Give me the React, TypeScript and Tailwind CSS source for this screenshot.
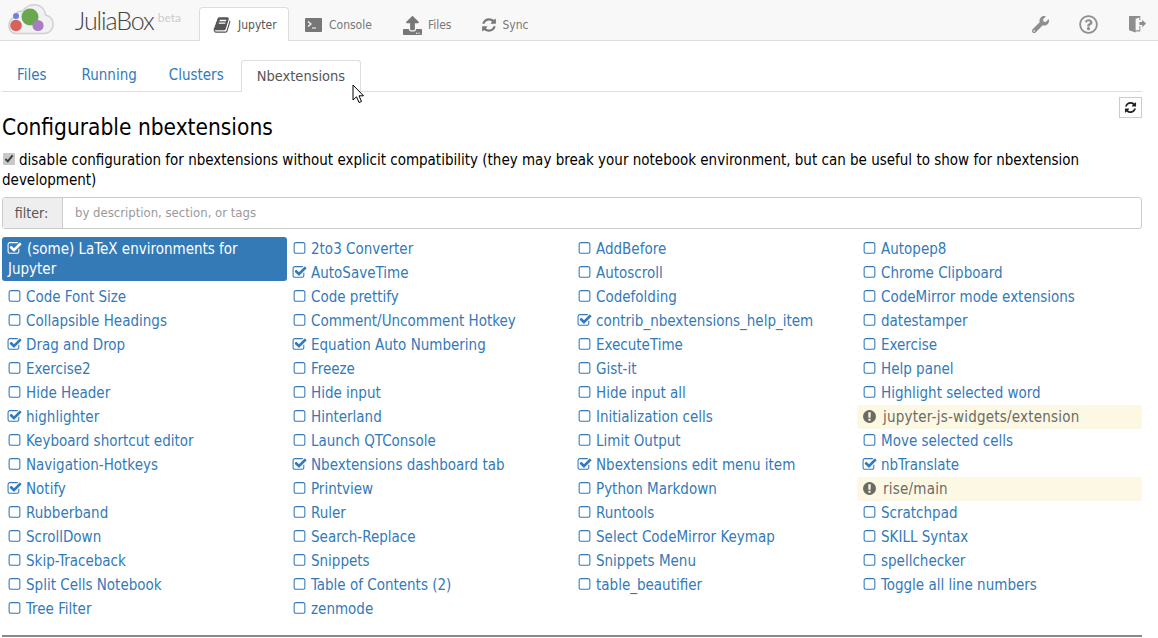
import React from 'react';
import { FaUpload, FaWrench, FaRegQuestionCircle } from 'react-icons/fa';

const REFRESH = 'M1639 1056q0 5-1 7-64 268-268 434.5t-478 166.5q-146 0-282.5-55t-243.5-157l-129 129q-19 19-45 19t-45-19-19-45v-448q0-26 19-45t45-19h448q26 0 45 19t19 45-19 45l-137 137q71 66 161 102t187 36q134 0 250-65t186-179q11-17 53-117 8-23 30-23h192q13 0 22.5 9.5t9.5 22.5zm25-800v448q0 26-19 45t-45 19h-448q-26 0-45-19t-19-45 19-45l138-138q-148-137-349-137-134 0-250 65t-186 179q-11 17-53 117-8 23-30 23h-199q-13 0-22.5-9.5t-9.5-22.5v-7q65-268 270-434.5t480-166.5q146 0 284 55.5t245 156.5l130-129q19-19 45-19t45 19 19 45z';
const BOOK = 'M1703 478q40 57 18 129l-275 906q-19 64-76.5 107.5t-122.5 43.5h-923q-77 0-148.5-53.5t-99.5-131.5q-24-67-2-127 0-4 3-27t4-37q1-8-3-21.5t-3-19.5q2-11 8-21t16.5-23.5 16.5-23.5q23-38 45-91.5t30-91.5q3-10 .5-30t-.5-28q3-11 17-28t17-23q21-36 42-92t25-90q1-9-2.5-32t.5-28q4-13 22-30.5t22-22.5q19-26 42.5-84.5t27.5-96.5q1-8-3-25.5t-2-26.5q2-8 9-18t18-23 17-21q8-12 16.5-30.5t15-35 16-36 19.5-32 26.5-23.5 36-11.5 47.5 5.5l-1 3q38-9 51-9h761q74 0 114 56t18 130l-274 906q-36 119-71.5 153.5t-128.5 34.5h-869q-27 0-38 15-11 16-1 43 24 70 144 70h923q29 0 56-15.5t35-41.5l300-987q7-22 5-57 38 15 59 43zm-1064 2q-4 13 2 22.5t20 9.5h608q13 0 25.5-9.5t16.5-22.5l21-64q4-13-2-22.5t-20-9.5h-608q-13 0-25.5 9.5t-16.5 22.5zm-83 256q-4 13 2 22.5t20 9.5h608q13 0 25.5-9.5t16.5-22.5l21-64q4-13-2-22.5t-20-9.5h-608q-13 0-25.5 9.5t-16.5 22.5z';
const CHECKED = 'M1472 930v318q0 119-84.5 203.5t-203.5 84.5h-832q-119 0-203.5-84.5t-84.5-203.5v-832q0-119 84.5-203.5t203.5-84.5h832q63 0 117 25 15 7 18 23 3 17-9 29l-49 49q-10 10-23 10-3 0-9-2-23-6-45-6h-832q-66 0-113 47t-47 113v832q0 66 47 113t113 47h832q66 0 113-47t47-113v-254q0-13 9-22l64-64q10-10 23-10 6 0 12 3 20 8 20 29zm231-489l-814 814q-24 24-57 24t-57-24l-430-430q-24-24-24-57t24-57l110-110q24-24 57-24t57 24l263 263 647-647q24-24 57-24t57 24l110 110q24 24 24 57t-24 57z';
const UNCHECKED = 'M1312 256h-832q-66 0-113 47t-47 113v832q0 66 47 113t113 47h832q66 0 113-47t47-113v-832q0-66-47-113t-113-47zm288 160v832q0 119-84.5 203.5t-203.5 84.5h-832q-119 0-203.5-84.5t-84.5-203.5v-832q0-119 84.5-203.5t203.5-84.5h832q119 0 203.5 84.5t84.5 203.5z';
const WARN = 'M896 128q209 0 385.5 103t279.5 279.5 103 385.5-103 385.5-279.5 279.5-385.5 103-385.5-103-279.5-279.5-103-385.5 103-385.5 279.5-279.5 385.5-103zm128 1247v-190q0-14-9-23.5t-22-9.5h-192q-13 0-23 10t-10 23v190q0 13 10 23t23 10h192q13 0 22-9.5t9-23.5zm-2-344l18-621q0-12-10-18-10-8-24-8h-220q-14 0-24 8-10 6-10 18l17 621q0 10 10 17.5t24 7.5h185q14 0 23.5-7.5t10.5-17.5z';

const Fa4 = ({ d, className }: { d: string; className?: string }) => (
  <svg viewBox="0 0 1792 1792" fill="currentColor" className={className}>
    <path d={d} />
  </svg>
);

type Ext = { name: string; on?: boolean; warn?: boolean; active?: boolean };

const columns: Ext[][] = [
  [
    { name: '(some) LaTeX environments for Jupyter', on: true, active: true },
    { name: 'Code Font Size' },
    { name: 'Collapsible Headings' },
    { name: 'Drag and Drop', on: true },
    { name: 'Exercise2' },
    { name: 'Hide Header' },
    { name: 'highlighter', on: true },
    { name: 'Keyboard shortcut editor' },
    { name: 'Navigation-Hotkeys' },
    { name: 'Notify', on: true },
    { name: 'Rubberband' },
    { name: 'ScrollDown' },
    { name: 'Skip-Traceback' },
    { name: 'Split Cells Notebook' },
    { name: 'Tree Filter' },
  ],
  [
    { name: '2to3 Converter' },
    { name: 'AutoSaveTime', on: true },
    { name: 'Code prettify' },
    { name: 'Comment/Uncomment Hotkey' },
    { name: 'Equation Auto Numbering', on: true },
    { name: 'Freeze' },
    { name: 'Hide input' },
    { name: 'Hinterland' },
    { name: 'Launch QTConsole' },
    { name: 'Nbextensions dashboard tab', on: true },
    { name: 'Printview' },
    { name: 'Ruler' },
    { name: 'Search-Replace' },
    { name: 'Snippets' },
    { name: 'Table of Contents (2)' },
    { name: 'zenmode' },
  ],
  [
    { name: 'AddBefore' },
    { name: 'Autoscroll' },
    { name: 'Codefolding' },
    { name: 'contrib_nbextensions_help_item', on: true },
    { name: 'ExecuteTime' },
    { name: 'Gist-it' },
    { name: 'Hide input all' },
    { name: 'Initialization cells' },
    { name: 'Limit Output' },
    { name: 'Nbextensions edit menu item', on: true },
    { name: 'Python Markdown' },
    { name: 'Runtools' },
    { name: 'Select CodeMirror Keymap' },
    { name: 'Snippets Menu' },
    { name: 'table_beautifier' },
  ],
  [
    { name: 'Autopep8' },
    { name: 'Chrome Clipboard' },
    { name: 'CodeMirror mode extensions' },
    { name: 'datestamper' },
    { name: 'Exercise' },
    { name: 'Help panel' },
    { name: 'Highlight selected word' },
    { name: 'jupyter-js-widgets/extension', warn: true },
    { name: 'Move selected cells' },
    { name: 'nbTranslate', on: true },
    { name: 'rise/main', warn: true },
    { name: 'Scratchpad' },
    { name: 'SKILL Syntax' },
    { name: 'spellchecker' },
    { name: 'Toggle all line numbers' },
  ],
];

const ExtItem = ({ ext }: { ext: Ext }) => {
  const tone = ext.active
    ? 'mb-[4px] bg-[#337ab7] text-white'
    : ext.warn
      ? 'bg-[#fcf8e3] tracking-[0.22px] text-[#6b6b66]'
      : 'text-[#337ab7]';
  const icon = ext.warn ? WARN : ext.on ? CHECKED : UNCHECKED;
  const gap = ext.warn ? 'mr-[6.5px]' : ext.active ? 'mr-[5.5px]' : 'mr-[4.5px]';
  return (
    <div className={`rounded-[3px] px-[6px] py-[2px] leading-[20px] ${tone}`}>
      <Fa4 d={icon} className={`ml-[-1.5px] inline-block h-[15px] w-[15px] align-[-2px] ${gap}`} />
      {ext.name}
    </div>
  );
};

const NavLink = ({ icon, label, className }: { icon: React.ReactNode; label: string; className: string }) => (
  <div className={`flex items-center text-[12px] text-[#777] ${className}`}>
    {icon}
    <span>{label}</span>
  </div>
);

export default function App() {
  return (
    <div className='relative h-[638px] w-[1158px] overflow-hidden bg-white font-["DejaVu_Sans_Condensed","DejaVu_Sans",sans-serif] text-[15px] text-black'>
      {/* top bar */}
      <div className="flex h-[41px] items-end border-b border-[#ddd] bg-[#f8f8f8]">
        <div className="relative flex h-[40px] w-[199px] flex-none items-center">
          <svg viewBox="0 0 50 36" className="ml-[7px] h-[36px] w-[50px]">
            <path
              d="M9 31.5 C3.5 31.5 1.5 26 2 22.5 C2.5 18.5 5 16 8 15 C8 10.5 12 8.5 15.5 9.5 C18.5 4 24.5 2 30 3 C35.5 4 38.5 9 38.5 13 C44 14 47 18.5 46 24 C45 29 41 31.5 37 31.5 Z"
              fill="#f1f1f1"
              stroke="#cfcfcf"
              strokeWidth="1.4"
            />
            <circle cx="23" cy="15" r="8.5" fill="#6aa84f" />
            <circle cx="9" cy="23.5" r="5.8" fill="#d9605c" />
            <circle cx="31" cy="23.5" r="5.6" fill="#a97cc4" />
            <circle cx="9" cy="14" r="3" fill="#6a83dc" />
          </svg>
          <span className='ml-[18px] font-["Lato"] text-[25px] font-light leading-none tracking-[-1.1px] text-[#444]'>JuliaBox</span>
          <span className='mb-[5px] ml-[4px] font-["Lato"] text-[12px] leading-none text-[#ccc]'>beta</span>
        </div>
        <div className="mb-[-1px] flex h-[34px] w-[90px] flex-none items-center rounded-t-[4px] border border-b-0 border-[#ddd] bg-white pl-[13px] text-[12px] text-[#555]">
          <Fa4 d={BOOK} className="mr-[7px] h-[18px] w-[18px] text-[#555]" />
          <span>Jupyter</span>
        </div>
        <div className="flex h-[34px] flex-1 items-center pt-[4px]">
          <NavLink
            className="ml-[16px]"
            label="Console"
            icon={
              <span className="mr-[7px] flex h-[14px] w-[17px] items-center rounded-[1px] bg-[#777] pl-[2px]">
                <svg viewBox="0 0 13 10" className="h-[10px] w-[13px]">
                  <path d="M1 1.5 L4 4 L1 6.5 M5 8 H9" fill="none" stroke="#fff" strokeWidth="1.2" />
                </svg>
              </span>
            }
          />
          <NavLink className="ml-[31px]" label="Files" icon={<FaUpload className="mr-[6px] h-[19px] w-[19px]" />} />
          <NavLink
            className="ml-[30px]"
            label="Sync"
            icon={<Fa4 d={REFRESH} className="mr-[5px] h-[16px] w-[16px]" />}
          />
          <div className="mb-[2px] ml-auto flex items-center text-[#8e8e8e]">
            <FaWrench className="h-[17px] w-[17px]" />
            <FaRegQuestionCircle className="ml-[30px] h-[19px] w-[19px]" />
            <svg viewBox="0 0 18 18" className="mr-[12px] ml-[31px] h-[18px] w-[17px]" fill="currentColor">
              <path d="M0 0.5 H12 V5 H11 V2 L7 3.5 V15.5 H11 V11 H12 V17 H7 V18 L0 15.5 Z" />
              <path d="M11 7 H14 V4.5 L18 8.5 L14 12.5 V10 H11 Z" />
            </svg>
          </div>
        </div>
      </div>

      <div className="ml-[2px] w-[1140px]">
        {/* notebook tabs */}
        <div className="mt-[19px] flex h-[32px] items-end border-b border-[#ddd] text-[#337ab7]">
          <div className="flex h-[31px] items-center px-[15px]">Files</div>
          <div className="ml-[5px] flex h-[31px] items-center px-[15px]">Running</div>
          <div className="ml-[2px] flex h-[31px] items-center px-[15px]">Clusters</div>
          <div className="relative mb-[-1px] ml-[2px] flex h-[32px] items-center rounded-t-[3px] border border-b-0 border-[#ddd] bg-white px-[15px] text-[14.5px] text-[#555]">
            Nbextensions
          </div>
        </div>

        {/* title row */}
        <div className="flex items-start justify-between">
          <h1 className="mt-[20px] text-[22.5px] leading-[30px] font-medium">Configurable nbextensions</h1>
          <button className="mt-[5px] flex h-[21px] w-[23px] items-center justify-center border border-[#ccc] bg-white text-[#222]">
            <Fa4 d={REFRESH} className="h-[13px] w-[13px]" />
          </button>
        </div>

        <p className="mt-[8px] leading-[20px]">
          <input
            type="checkbox"
            checked
            readOnly
            className="mr-[4px] ml-[1px] inline-block h-[12px] w-[12px] accent-[#c8c8c8] align-[0px]"
          />
          disable configuration for nbextensions without explicit compatibility (they may break your notebook environment, but can be useful to show for nbextension development)
        </p>

        {/* filter */}
        <div className="mt-[7px] flex h-[32px] rounded-[3px] border border-[#ccc] text-[14px]">
          <div className="flex w-[60px] flex-none items-center justify-center border-r border-[#ccc] bg-[#eee] pr-[2px] text-[#555]">filter:</div>
          <div className="flex flex-1 items-center pl-[12px] text-[13px] text-[#999]">by description, section, or tags</div>
        </div>

        {/* extensions */}
        <div className="mt-[8px] grid grid-cols-4">
          {columns.map((col, i) => (
            <div key={i} className="flex flex-col">
              {col.map((ext) => (
                <ExtItem key={ext.name} ext={ext} />
              ))}
            </div>
          ))}
        </div>

        <hr className="mt-[14px] border-t-[2px] border-[#888]" />
      </div>

      {/* mouse cursor */}
      <svg viewBox="0 0 13 20" className="absolute top-[84px] left-[352px] h-[20px] w-[13px]">
        <path d="M1 1 V16 L4.5 12.8 L7 18.5 L9.5 17.5 L7 11.8 H11.5 Z" fill="#fff" stroke="#000" strokeWidth="1" />
      </svg>
    </div>
  );
}
